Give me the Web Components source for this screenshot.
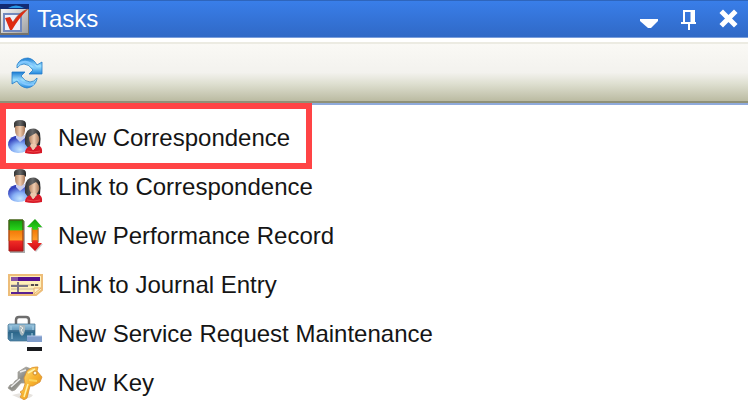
<!DOCTYPE html>
<html lang="en">
<head>
<meta charset="utf-8">
<title>Tasks</title>
<style>
html,body{margin:0;background:#fff}
body{font:24px/28px "Liberation Sans",Arial,sans-serif;color:#151515}
</style>
</head>
<body>
<task-panel>
  <panel-header slot="header">Tasks</panel-header>
  <panel-toolbar slot="toolbar"></panel-toolbar>
  <task-item icon="people" highlighted>New Correspondence</task-item>
  <task-item icon="people">Link to Correspondence</task-item>
  <task-item icon="performance">New Performance Record</task-item>
  <task-item icon="journal">Link to Journal Entry</task-item>
  <task-item icon="service">New Service Request Maintenance</task-item>
  <task-item icon="key">New Key</task-item>
</task-panel>
<script>
const icons = {
people: `<defs>
<radialGradient id="b" cx=".55" cy=".8" r=".7"><stop stop-color="#c4e5ff"/><stop offset=".5" stop-color="#86aef5"/><stop offset="1" stop-color="#3442bd"/></radialGradient>
<linearGradient id="f" x2="1"><stop stop-color="#b38362"/><stop offset=".5" stop-color="#f0cdb0"/><stop offset="1" stop-color="#a87758"/></linearGradient>
<linearGradient id="h" x2="1"><stop stop-color="#333"/><stop offset=".5" stop-color="#686868"/><stop offset="1" stop-color="#222"/></linearGradient></defs>
<path d="M0 24Q0 17 7 15H16Q22 17 22 25Q20 32 10 32Q1 31 0 24Z" fill="url(#b)"/>
<path d="M8 14h9v3l-5 4-4-4Z" fill="#c9cdec"/>
<path d="M7 4Q12 2 17 4V10Q16 16 12 16Q7 15 7 9Z" fill="url(#f)"/>
<path d="M6 7V2Q7 -1 12 -1Q18 -1 18 3V7L16 5H8Z" fill="url(#h)"/>
<path d="M17 23Q16 10 22 8Q29 6 32 12Q33 18 32 24L28 27H20Z" fill="url(#h)"/>
<path d="M21 16L28 12Q32 15 31 20Q29 25 25 25Q21 22 21 16Z" fill="url(#f)"/>
<path d="M17 32Q17 27 22 25L25 29L30 24Q35 26 34 32Q25 34 17 32Z" fill="#d71927"/>
<path d="M22 25l3 4 4-4-1-2h-5Z" fill="#edc8ac"/><path d="M19 30q7 2 13 0" fill="none" stroke="#ee4548"/>`,
performance: `<defs><linearGradient id="p" x2="0" y2="1"><stop stop-color="#149a0b"/><stop offset=".32" stop-color="#28d51b"/><stop offset=".35" stop-color="#f37a08"/><stop offset=".64" stop-color="#ff9b25"/><stop offset=".68" stop-color="#f02c25"/><stop offset="1" stop-color="#ce0c17"/></linearGradient></defs>
<path d="M2 2h15v32H2Z" fill="#aaa"/><path d="M1 1h14v31H1Z" fill="url(#p)" stroke="#9d221b"/><path d="M1 11V1h14v10" fill="none" stroke="#168013"/><path d="M1 22V11M15 11V22" stroke="#bd6410"/>
<path d="M28 1L35 9H31V25H35L28 33L20 25H25V9H20Z" fill="#999" opacity=".5"/>
<path d="M27 0L34 8H30V24H34L27 32L19 24H24V8H19Z" fill="url(#p)"/><path d="M24 9V23M30 9V23" stroke="#a8702f"/>`,
journal: `<path d="M1 7H34V22L28 27H1Z" fill="#fff0b9" stroke="#edbd79" stroke-width="2"/>
<path d="M3 9H32V13H3Z" fill="#54108e"/><path d="M3 9H10V13H3Z" fill="#8652a5"/>
<path d="M3 17H31M3 21H31" stroke="#c8bc9b"/><path d="M3 18H20M10 14V24" stroke="#787386" stroke-width="2"/>
<path d="M23 17h3M27 17h3" stroke="#554c4b" stroke-width="2"/><path d="M3 25H25" stroke="#5a2191" stroke-width="2"/>
<path d="M26 26V20H33Z" fill="#fff0cb" stroke="#e8ae6b"/>`,
service: `<defs><linearGradient id="s" x2="0" y2="1"><stop stop-color="#9dc7df"/><stop offset=".43" stop-color="#5a92b7"/><stop offset=".5" stop-color="#2c678b"/><stop offset="1" stop-color="#4d84a8"/></linearGradient></defs>
<path d="M8 8V3Q8 0 11 0H18Q21 0 21 3V8" fill="none" stroke="#6d6d6d" stroke-width="2.5"/>
<path d="M1 7H27V22Q27 24 25 24H2L0 22V8Z" fill="url(#s)" stroke="#3d6d8d" stroke-width=".7"/>
<path d="M1 14H27" stroke="#234e6c"/><path d="M3 9V13M25 9V13M4 16V22M24 16V19" stroke="#add3e6"/>
<path d="M11 8h6v5l-1 4-2 2-2-2-1-4Z" fill="#a6b7be"/><path d="M12 9l3 2-2 2 2 3" fill="none" stroke="#f0eee9"/>
<path d="M19 19H34V25H19Z" fill="#809dcb"/><path d="M19 19H34" stroke="#b2c4e5"/><path d="M19 30H34V34H19Z" fill="#191a1e"/>`,
key: `<defs><linearGradient id="g" x2="1" y2="1"><stop stop-color="#ffe784"/><stop offset=".5" stop-color="#f8b22e"/><stop offset="1" stop-color="#d4841a"/></linearGradient><linearGradient id="m" x2="1" y2="1"><stop stop-color="#dedede"/><stop offset=".5" stop-color="#8c8c86"/><stop offset="1" stop-color="#d0cfc9"/></linearGradient></defs>
<path d="M4 29Q18 25 25 29Q23 33 13 33" fill="#e6e3df"/>
<path d="M10 6L18 1L26 4V12L19 17L13 17L7 24L4 25L0 22L2 19L5 18L7 15L10 13Z" fill="url(#m)" stroke="#9b9890" stroke-width=".7"/>
<path d="M3 21L12 13M12 6L18 4" stroke="#eee" stroke-width="1.5"/>
<path d="M19 5Q24 0 30 1L29 5L34 11L32 16L25 20L22 20L19 32L16 34L12 31L14 28L12 26L15 24L17 18L16 12Z" fill="url(#g)" stroke="#d99135" stroke-width=".8"/>
<path d="M20 18L16 31M20 7L27 3" stroke="#fff1a7" stroke-width="1.5"/><circle cx="27" cy="7" r="2" fill="#fff6d8" stroke="#cd8826"/><path d="M21 14L29 15" stroke="#fbd45c" stroke-width="2"/>`
};

class TaskPanel extends HTMLElement {
  constructor() {
    super();
    this.attachShadow({mode:'open'}).innerHTML = `<style>
:host{display:flex;flex-direction:column;height:100vh;overflow:hidden}
nav{display:flex;flex-direction:column;align-items:flex-start;padding-top:10px}
</style><slot name="header"></slot><slot name="toolbar"></slot><nav aria-label="Tasks"><slot></slot></nav>`;
  }
}
class PanelHeader extends HTMLElement {
  constructor() {
    super();
    this.attachShadow({mode:'open'}).innerHTML = `<style>
:host{display:block;flex:none;background:#fff;padding-bottom:4px}
header{display:flex;align-items:center;height:36px;background:linear-gradient(#397ee9,#3069c6);border-top:1px solid #2e65bc;border-bottom:1px solid #7a9edb;color:#fff}
h1{font:inherit;margin:0 auto 0 8px}
.logo{width:29px;height:32px}
.actions{display:flex;gap:16px;padding-right:8px}
button{display:grid;place-items:center;border:0;background:none;padding:0;width:24px;height:28px}
svg{display:block}
</style><header>
<svg class="logo" viewBox="0 0 29 32" aria-hidden="true"><defs><linearGradient id="a" x2="1" y2="1"><stop stop-color="#fff"/><stop offset="1" stop-color="#9a9b9c"/></linearGradient></defs>
<path d="M0 1H29V32H0Z" fill="url(#a)"/><path d="M0 1H29V6H0Z" fill="#132b73"/><path d="M8 5Q16 0 24 5Z" fill="#2a99e8"/><path d="M0 31H29V6M0 6V31" fill="none" stroke="#77736b" stroke-width="2"/><path d="M4 11H21V28H4Z" fill="#eef0fa" stroke="#7289bd" stroke-width="2"/><path d="M5 15L10 14L13 19Q19 9 28 6Q19 15 12 27H10Z" fill="#de2b12"/><path d="M13 19Q19 9 28 6" fill="none" stroke="#9b5135" stroke-width=".7"/></svg>
<h1><slot></slot></h1><div class="actions">
<button aria-label="Window menu"><svg width="24" height="28" viewBox="0 0 24 28"><path d="M4 14H22V16L15 23H12L4 16Z" fill="#fff"/></svg></button>
<button aria-label="Pin panel"><svg width="24" height="28" viewBox="0 0 24 28"><path d="M8 17V6H18V17M5 18H20M13 18V25" fill="none" stroke="#fff" stroke-width="2"/><path d="M16 6V17" stroke="#fff" stroke-width="3"/></svg></button>
<button aria-label="Close panel"><svg width="24" height="28" viewBox="0 0 24 28"><path d="M7 8L18 19M18 8L7 19" stroke="#fff" stroke-width="5" stroke-linecap="square"/></svg></button>
</div></header>`;
  }
}
class PanelToolbar extends HTMLElement {
  constructor() {
    super();
    this.attachShadow({mode:'open'}).innerHTML = `<style>
:host{display:flex;flex:none;align-items:center;box-sizing:border-box;height:61px;padding-left:10px;background:linear-gradient(#faf9f5,#f3f2ee 50%,#dedfd0 70%,#bbbba2);border-top:2px solid #ecebe2;border-bottom:2px solid #8f9178;box-shadow:0 2px #8faadb}
button{display:grid;place-items:center;width:34px;height:34px;padding:0;border:0;background:none}
</style><button aria-label="Refresh"><svg width="34" height="34" viewBox="0 0 34 34"><defs><linearGradient id="r" x2="0" y2="1"><stop stop-color="#1879d2"/><stop offset=".5" stop-color="#9ee2ff"/><stop offset="1" stop-color="#2388df"/></linearGradient></defs>
<g fill="url(#r)" stroke="#257cc9" stroke-width=".8" stroke-linejoin="round"><path d="M7 9Q10 2 18 2Q24 3 27 9L32 6V18H19L23 14Q19 8 14 8Q10 8 7 12Z"/><path d="M27 23Q25 31 17 32Q10 31 7 25L2 28V16H15L11 20Q15 26 20 26Q24 26 27 22Z"/></g><path d="M9 8Q17 2 26 12M24 28Q14 31 8 22" fill="none" stroke="#84c8ff" stroke-width="2"/></svg></button>`;
  }
}
class TaskItem extends HTMLElement {
  constructor() {
    super();
    this.attachShadow({mode:'open'}).innerHTML = `<style>
:host{display:block;position:relative}
button{display:flex;align-items:center;gap:16px;height:49px;border:0;background:none;padding:0 0 0 8px;font:inherit;color:inherit;white-space:nowrap;text-align:left}
svg{display:block;flex:none;width:34px;height:34px;overflow:visible}
:host([highlighted])::after{content:"";position:absolute;inset:-10px -22px -7px 0;border:6px solid #ff4445;pointer-events:none}
</style><button><svg viewBox="0 0 34 34" aria-hidden="true">${icons[this.getAttribute('icon')]}</svg><span><slot></slot></span></button>`;
  }
}
customElements.define('task-panel', TaskPanel);
customElements.define('panel-header', PanelHeader);
customElements.define('panel-toolbar', PanelToolbar);
customElements.define('task-item', TaskItem);
</script>
</body>
</html>
